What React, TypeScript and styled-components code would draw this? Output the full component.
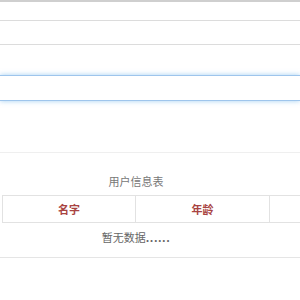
import styled, { createGlobalStyle } from "styled-components";

const GlobalStyle = createGlobalStyle`
  html, body {
    margin: 0;
    padding: 0;
    background: #fff;
    font-family: "Noto Sans CJK SC", "Noto Sans", sans-serif;
  }
`;

function App() {
  return (
    <Page>
      <GlobalStyle />
      <TopField />
      <Field />
      <FocusField />
      <Divider />
      <Caption>用户信息表</Caption>
      <Table>
        <HeadCell>名字</HeadCell>
        <HeadCell>年龄</HeadCell>
        <HeadCell />
      </Table>
      <EmptyRow>
        暂无数据<Dots>......</Dots>
      </EmptyRow>
    </Page>
  );
}
export default App;

// ====== Styled ======
const Page = styled.div`
  width: 300px;
  overflow: hidden;
  display: flex;
  flex-direction: column;
`;

const TopField = styled.div`
  box-sizing: border-box;
  height: 21px;
  border-top: 2px solid #cfcfcf;
  border-bottom: 1px solid #dcdcdc;
`;

const Field = styled.div`
  box-sizing: border-box;
  height: 24px;
  border-bottom: 1px solid #dcdcdc;
`;

const FocusField = styled.div`
  box-sizing: border-box;
  height: 26px;
  margin-top: 30px;
  border-top: 1px solid #9ec5ec;
  border-bottom: 1px solid #9ec5ec;
  box-shadow: 0 0 5px rgba(102, 175, 233, 0.6);
`;

const Divider = styled.div`
  margin-top: 51px;
  height: 1px;
  background: #efefef;
`;

const Caption = styled.div`
  box-sizing: border-box;
  padding: 20px 28px 6px 0;
  line-height: 16px;
  font-size: 11px;
  color: #777;
  text-align: center;
`;

const Table = styled.div`
  display: grid;
  grid-template-columns: 133px 134px 134px;
  width: 401px;
  margin-left: 2px;
  border-top: 1px solid #e2e2e2;
  border-left: 1px solid #e2e2e2;
`;

const HeadCell = styled.div`
  height: 26px;
  line-height: 26px;
  border-right: 1px solid #e2e2e2;
  border-bottom: 1px solid #e2e2e2;
  text-align: center;
  font-size: 11px;
  font-weight: bold;
  color: #a94442;
`;

const EmptyRow = styled.div`
  box-sizing: border-box;
  height: 35px;
  padding: 6px 28px 0 0;
  line-height: 16px;
  font-size: 11px;
  color: #666;
  text-align: center;
  border-bottom: 1px solid #e5e5e5;
`;

const Dots = styled.span`
  font-weight: bold;
  letter-spacing: 0.5px;
`;
